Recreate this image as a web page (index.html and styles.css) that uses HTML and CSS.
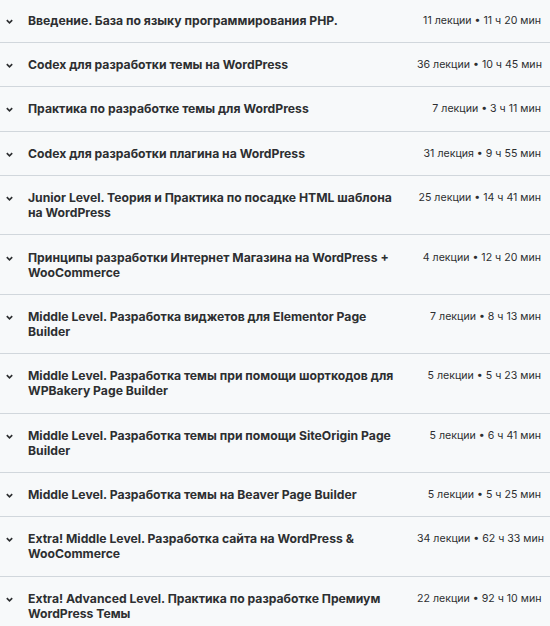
FILE: index.html
```html
<!DOCTYPE html>
<html lang="ru">
<head>
<meta charset="utf-8">
<link rel="stylesheet" href="styles.css">
</head>
<body>
<div class="sections">
  <div class="section">
    <svg class="chev" viewBox="0 0 10 10"><path d="M2 3.5 L5 6.5 L8 3.5"/></svg>
    <div class="title">Введение. База по языку программирования PHP.</div>
    <div class="meta">11 лекции • 11 ч 20 мин</div>
  </div>
  <div class="section">
    <svg class="chev" viewBox="0 0 10 10"><path d="M2 3.5 L5 6.5 L8 3.5"/></svg>
    <div class="title">Codex для разработки темы на WordPress</div>
    <div class="meta">36 лекции • 10 ч 45 мин</div>
  </div>
  <div class="section">
    <svg class="chev" viewBox="0 0 10 10"><path d="M2 3.5 L5 6.5 L8 3.5"/></svg>
    <div class="title">Практика по разработке темы для WordPress</div>
    <div class="meta">7 лекции • 3 ч 11 мин</div>
  </div>
  <div class="section">
    <svg class="chev" viewBox="0 0 10 10"><path d="M2 3.5 L5 6.5 L8 3.5"/></svg>
    <div class="title">Codex для разработки плагина на WordPress</div>
    <div class="meta">31 лекция • 9 ч 55 мин</div>
  </div>
  <div class="section">
    <svg class="chev" viewBox="0 0 10 10"><path d="M2 3.5 L5 6.5 L8 3.5"/></svg>
    <div class="title">Junior Level. Теория и Практика по посадке HTML шаблона на WordPress</div>
    <div class="meta">25 лекции • 14 ч 41 мин</div>
  </div>
  <div class="section">
    <svg class="chev" viewBox="0 0 10 10"><path d="M2 3.5 L5 6.5 L8 3.5"/></svg>
    <div class="title">Принципы разработки Интернет Магазина на WordPress + WooCommerce</div>
    <div class="meta">4 лекции • 12 ч 20 мин</div>
  </div>
  <div class="section">
    <svg class="chev" viewBox="0 0 10 10"><path d="M2 3.5 L5 6.5 L8 3.5"/></svg>
    <div class="title">Middle Level. Разработка виджетов для Elementor Page Builder</div>
    <div class="meta">7 лекции • 8 ч 13 мин</div>
  </div>
  <div class="section">
    <svg class="chev" viewBox="0 0 10 10"><path d="M2 3.5 L5 6.5 L8 3.5"/></svg>
    <div class="title">Middle Level. Разработка темы при помощи шорткодов для WPBakery Page Builder</div>
    <div class="meta">5 лекции • 5 ч 23 мин</div>
  </div>
  <div class="section">
    <svg class="chev" viewBox="0 0 10 10"><path d="M2 3.5 L5 6.5 L8 3.5"/></svg>
    <div class="title">Middle Level. Разработка темы при помощи SiteOrigin Page Builder</div>
    <div class="meta">5 лекции • 6 ч 41 мин</div>
  </div>
  <div class="section">
    <svg class="chev" viewBox="0 0 10 10"><path d="M2 3.5 L5 6.5 L8 3.5"/></svg>
    <div class="title">Middle Level. Разработка темы на Beaver Page Builder</div>
    <div class="meta">5 лекции • 5 ч 25 мин</div>
  </div>
  <div class="section">
    <svg class="chev" viewBox="0 0 10 10"><path d="M2 3.5 L5 6.5 L8 3.5"/></svg>
    <div class="title">Extra! Middle Level. Разработка сайта на WordPress &amp; WooCommerce</div>
    <div class="meta">34 лекции • 62 ч 33 мин</div>
  </div>
  <div class="section">
    <svg class="chev" viewBox="0 0 10 10"><path d="M2 3.5 L5 6.5 L8 3.5"/></svg>
    <div class="title">Extra! Advanced Level. Практика по разработке Премиум WordPress Темы</div>
    <div class="meta">22 лекции • 92 ч 10 мин</div>
  </div>
</div>
</body>
</html>
```
FILE: styles.css
```css
html, body {
  margin: 0;
  padding: 0;
  background: #f7f9fa;
}
body {
  font-family: Inter, "Noto Sans", "Liberation Sans", sans-serif;
  color: #2d2f31;
  overflow: hidden;
}
.sections {
  margin-top: -1.5px;
}
.section {
  display: flex;
  align-items: flex-start;
  padding: 14.2px 9px 14.2px 5px;
  border-bottom: 1px solid #d1d7dc;
}
.chev {
  flex-shrink: 0;
  width: 9px;
  height: 9px;
  margin: 4px 14px 0 0;
}
.chev path {
  fill: none;
  stroke: #2d2f31;
  stroke-width: 1.8;
}
.title {
  flex: 1;
  font-size: 12.2px;
  font-weight: 700;
  line-height: 15px;
  padding-right: 12px;
}
.meta {
  flex-shrink: 0;
  width: 124px;
  text-align: right;
  font-size: 10.6px;
  line-height: 15px;
  white-space: nowrap;
}
```
